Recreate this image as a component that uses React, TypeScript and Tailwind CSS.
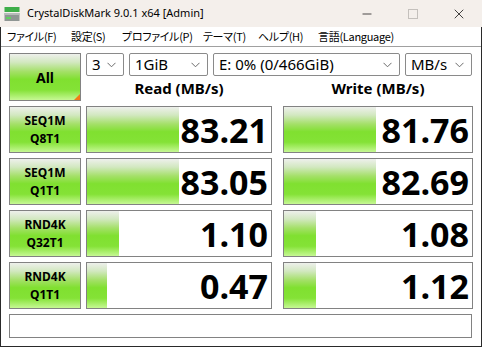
import { Minus, X } from 'lucide-react';

const GREEN =
  'bg-[linear-gradient(to_bottom,#eef0ec_0%,#d2e8c0_18%,#a4e068_38%,#80e030_55%,#84e236_78%,#c6f894_100%)]';

const ui = "font-['Noto_Sans','Open_Sans',sans-serif]";
const jp = "font-['Noto_Sans_CJK_JP','Noto_Sans',sans-serif] [font-feature-settings:'palt']";

interface Row {
  top: string;
  bottom: string;
  read: string;
  write: string;
  readBar: number;
  writeBar: number;
}

const rows: Row[] = [
  { top: 'SEQ1M', bottom: 'Q8T1', read: '83.21', write: '81.76', readBar: 92, writeBar: 92 },
  { top: 'SEQ1M', bottom: 'Q1T1', read: '83.05', write: '82.69', readBar: 92, writeBar: 92 },
  { top: 'RND4K', bottom: 'Q32T1', read: '1.10', write: '1.08', readBar: 32, writeBar: 32 },
  { top: 'RND4K', bottom: 'Q1T1', read: '0.47', write: '1.12', readBar: 20, writeBar: 32 },
];

const menus = [
  { label: 'ファイル(F)', w: 'w-[64px]' },
  { label: '設定(S)', w: 'w-[51px]' },
  { label: 'プロファイル(P)', w: 'w-[81px]' },
  { label: 'テーマ(T)', w: 'w-[55px]' },
  { label: 'ヘルプ(H)', w: 'w-[60px]' },
  { label: '言語(Language)', w: 'w-[100px]' },
];

function Chevron() {
  return (
    <svg width="9" height="6" viewBox="0 0 9 6" className="shrink-0">
      <path d="M0.5 0.8 L4.5 4.8 L8.5 0.8" fill="none" stroke="#6b6b6b" strokeWidth="1" />
    </svg>
  );
}

function Combo({ value, w }: { value: string; w: string }) {
  return (
    <div
      className={`${w} h-[23px] border border-[#8a8a8a] rounded-[2px] bg-white flex items-center justify-between pl-[5px] pr-[7px] text-[15px] text-black ${ui}`}
    >
      <span className="leading-none">{value}</span>
      <Chevron />
    </div>
  );
}

function DriveIcon() {
  return (
    <svg width="16" height="16" viewBox="0 0 16 16">
      <rect x="0.5" y="1" width="15" height="5" fill="#3fae49" />
      <rect x="0.5" y="7" width="15" height="8" fill="#8f9694" />
      <rect x="0.5" y="7" width="15" height="2" fill="#b5bbb9" />
      <rect x="2" y="11" width="5" height="2" fill="#5fd35f" />
    </svg>
  );
}

function ResultBox({ value, bar, w }: { value: string; bar: number; w: string }) {
  return (
    <div className={`${w} h-full border border-[#828282] bg-white flex items-stretch relative`}>
      <div className={`${GREEN} h-full shrink-0`} style={{ width: bar }} />
      <div className="flex-1" />
      <span className="absolute right-[3px] top-0 bottom-0 flex items-center text-[34px] font-bold text-black leading-none font-['Open_Sans',sans-serif]">
        {value}
      </span>
    </div>
  );
}

export default function App() {
  return (
    <div className="w-[482px] h-[347px] bg-white flex flex-col overflow-hidden">
      {/* title bar */}
      <div className={`h-[27px] bg-[#f4efeb] flex items-center shrink-0 ${ui}`}>
        <div className="pl-[4px] pr-[7px] flex items-center">
          <DriveIcon />
        </div>
        <span className="text-[11px] text-black">CrystalDiskMark 9.0.1 x64 [Admin]</span>
        <div className="ml-auto flex items-center h-full">
          <div className="w-[46px] h-full flex items-center justify-center">
            <Minus size={14} strokeWidth={1.2} className="text-black" />
          </div>
          <div className="w-[46px] h-full flex items-center justify-center">
            <div className="w-[10px] h-[10px] border border-[#c4c0bc]" />
          </div>
          <div className="w-[46px] h-full flex items-center justify-center">
            <X size={16} strokeWidth={1.1} className="text-black" />
          </div>
        </div>
      </div>

      <div className="flex-1 flex flex-col border-l border-r border-b border-[#2a2a2a]">
        {/* menu bar */}
        <div className={`h-[20px] shrink-0 flex items-center pl-[6px] text-[11px] tracking-[-0.3px] text-black border-b border-[#a0a0a0] ${jp}`}>
          {menus.map((m) => (
            <span key={m.label} className={`${m.w} shrink-0 whitespace-nowrap leading-none`}>
              {m.label}
            </span>
          ))}
        </div>

        {/* client */}
        <div className="flex-1 flex flex-col pl-[8px] pt-[6px]">
          <div className="flex gap-[5px] h-[48px]">
            <div
              className={`${GREEN} w-[72px] h-[48px] border border-[#828282] flex items-center justify-center relative text-[14px] font-bold text-black ${ui}`}
            >
              All
              <div className="absolute right-0 bottom-0 w-0 h-0 border-l-[6px] border-l-transparent border-b-[6px] border-b-[#f47b16]" />
            </div>
            <div className="flex flex-col flex-1">
              <div className="flex gap-[5px]">
                <Combo value="3" w="w-[38px]" />
                <Combo value="1GiB" w="w-[79px]" />
                <Combo value="E: 0% (0/466GiB)" w="w-[187px]" />
                <Combo value="MB/s" w="w-[67px]" />
              </div>
              <div className={`flex flex-1 items-center text-[15px] font-bold text-black ${ui}`}>
                <span className="w-[186px] text-center">Read (MB/s)</span>
                <span className="w-[11px]" />
                <span className="w-[190px] text-center">Write (MB/s)</span>
              </div>
            </div>
          </div>

          <div className="flex flex-col gap-[5px] mt-[5px]">
            {rows.map((r, i) => (
              <div key={i} className="flex h-[47px]">
                <div
                  className={`${GREEN} w-[72px] h-full border border-[#828282] flex flex-col items-center justify-center text-[12px] font-bold text-black leading-[18px] ${ui}`}
                >
                  <span>{r.top}</span>
                  <span>{r.bottom}</span>
                </div>
                <div className="w-[5px]" />
                <ResultBox value={r.read} bar={r.readBar} w="w-[186px]" />
                <div className="w-[11px]" />
                <ResultBox value={r.write} bar={r.writeBar} w="w-[190px]" />
              </div>
            ))}
            <div className="w-[463px] h-[24px] border border-[#828282] bg-white" />
          </div>
        </div>
      </div>
    </div>
  );
}
